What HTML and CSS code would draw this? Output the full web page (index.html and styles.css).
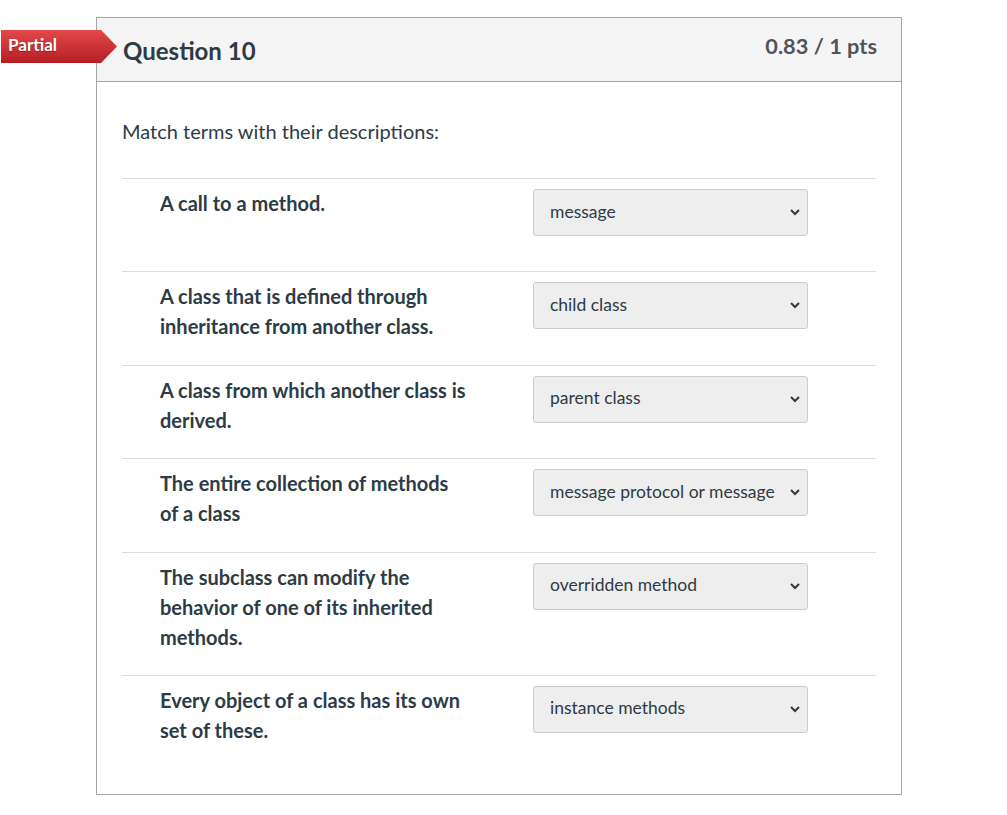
FILE: index.html
```html
<!DOCTYPE html>
<html>
<head>
<meta charset="utf-8">
<link rel="stylesheet" href="styles.css">
</head>
<body>
<div class="page">
  <div class="card">
    <div class="badge">
      <svg class="badge-shape" width="116" height="33" viewBox="0 0 116 33">
        <defs>
          <linearGradient id="rg" x1="0" y1="0" x2="0" y2="1">
            <stop offset="0" stop-color="#e4474a"/>
            <stop offset="1" stop-color="#b42024"/>
          </linearGradient>
        </defs>
        <polygon points="0,0 100,0 116,16.5 100,33 0,33" fill="url(#rg)"/>
      </svg>
      <span class="badge-text">Partial</span>
    </div>
    <div class="header">
      <div class="title">Question 10</div>
      <div class="points">0.83 / 1 pts</div>
    </div>
    <div class="body">
      <p class="prompt">Match terms with their descriptions:</p>
      <div class="row">
        <div class="term">A call to a method.</div>
        <div class="select"><span>message</span><svg width="10" height="7" viewBox="0 0 10 7"><polyline points="1,1 5,5 9,1" fill="none" stroke="#2d3b45" stroke-width="2"/></svg></div>
      </div>
      <div class="row">
        <div class="term">A class that is defined through inheritance from another class.</div>
        <div class="select"><span>child class</span><svg width="10" height="7" viewBox="0 0 10 7"><polyline points="1,1 5,5 9,1" fill="none" stroke="#2d3b45" stroke-width="2"/></svg></div>
      </div>
      <div class="row">
        <div class="term">A class from which another class is derived.</div>
        <div class="select"><span>parent class</span><svg width="10" height="7" viewBox="0 0 10 7"><polyline points="1,1 5,5 9,1" fill="none" stroke="#2d3b45" stroke-width="2"/></svg></div>
      </div>
      <div class="row">
        <div class="term">The entire collection of methods of a class</div>
        <div class="select"><span>message protocol or message</span><svg width="10" height="7" viewBox="0 0 10 7"><polyline points="1,1 5,5 9,1" fill="none" stroke="#2d3b45" stroke-width="2"/></svg></div>
      </div>
      <div class="row">
        <div class="term">The subclass can modify the behavior of one of its inherited methods.</div>
        <div class="select"><span>overridden method</span><svg width="10" height="7" viewBox="0 0 10 7"><polyline points="1,1 5,5 9,1" fill="none" stroke="#2d3b45" stroke-width="2"/></svg></div>
      </div>
      <div class="row">
        <div class="term">Every object of a class has its own set of these.</div>
        <div class="select"><span>instance methods</span><svg width="10" height="7" viewBox="0 0 10 7"><polyline points="1,1 5,5 9,1" fill="none" stroke="#2d3b45" stroke-width="2"/></svg></div>
      </div>
    </div>
  </div>
</div>
</body>
</html>
```

FILE: styles.css
```css
html, body {
  margin: 0;
  padding: 0;
  background: #ffffff;
}
body {
  font-family: Lato, "Liberation Sans", sans-serif;
  color: #2d3b45;
}
.page {
  padding: 17px 0 0 96px;
}
.card {
  position: relative;
  width: 804px;
  border: 1px solid #a5a5a5;
  background: #fff;
}
.badge {
  position: absolute;
  left: -96px;
  top: 12px;
  width: 116px;
  height: 33px;
}
.badge-shape {
  display: block;
}
.badge-text {
  position: absolute;
  left: 7px;
  top: 5px;
  color: #fff;
  font-weight: 700;
  font-size: 17px;
  line-height: 20px;
  text-shadow: 0 1px 1px rgba(0,0,0,0.35);
}
.header {
  display: flex;
  justify-content: space-between;
  align-items: flex-start;
  height: 63px;
  background: #f5f5f5;
  border-bottom: 1px solid #a5a5a5;
  padding: 0 24px 0 26px;
}
.title {
  margin-top: 19px;
  font-size: 24px;
  line-height: 28px;
  font-weight: 700;
  color: #2d3b45;
}
.points {
  margin-top: 16px;
  font-size: 21.8px;
  line-height: 24px;
  font-weight: 700;
  color: #50555a;
}
.body {
  padding: 36px 25px 26px 25px;
}
.prompt {
  margin: 0 0 33px 0;
  font-size: 20px;
  line-height: 27px;
}
.row {
  display: grid;
  grid-template-columns: 373px 275px;
  border-top: 1px solid #dcdcdc;
  padding: 9px 0 23.4px 38px;
}
.term {
  font-size: 20px;
  line-height: 30px;
  font-weight: 700;
  width: 308px;
}
.select {
  display: flex;
  align-items: center;
  justify-content: space-between;
  box-sizing: border-box;
  height: 47px;
  margin: 1px 0 12px 0;
  padding: 0 7px 0 16px;
  background: #eeeeee;
  border: 1px solid #c7cdd1;
  border-radius: 3px;
  font-size: 17.5px;
  line-height: 20px;
  color: #2d3b45;
}
.select span {
  margin-top: -2px;
}
.select svg {
  display: block;
}
```
